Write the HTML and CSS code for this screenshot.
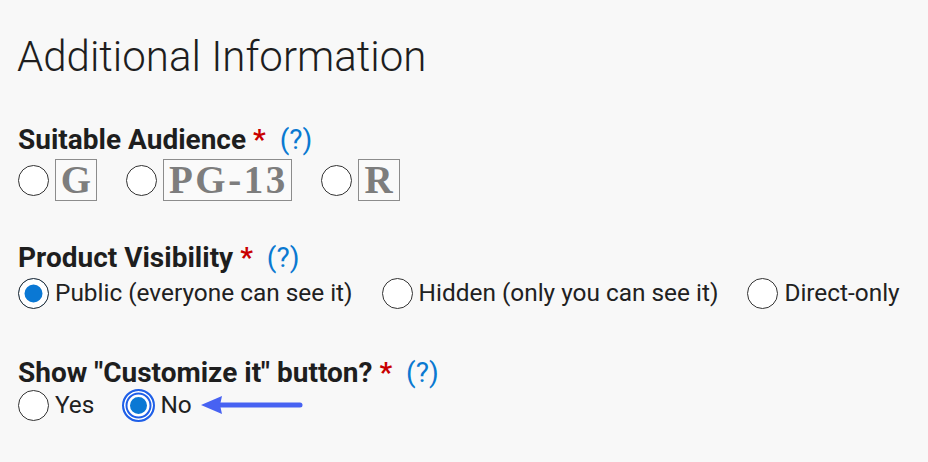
FILE: index.html
```html
<!DOCTYPE html>
<html lang="en">
<head>
<meta charset="utf-8">
<title>Additional Information</title>
<link rel="stylesheet" href="styles.css">
</head>
<body>
<main class="page">
  <h1 class="title">Additional Information</h1>

  <section class="field field-audience">
    <div class="label">Suitable Audience <span class="req">*</span> <a class="help">(?)</a></div>
    <div class="options">
      <label class="opt"><input type="radio" name="aud" class="radio"><span class="rating">G</span></label>
      <label class="opt"><input type="radio" name="aud" class="radio"><span class="rating rating-wide">PG-13</span></label>
      <label class="opt"><input type="radio" name="aud" class="radio"><span class="rating">R</span></label>
    </div>
  </section>

  <section class="field field-visibility">
    <div class="label">Product Visibility <span class="req">*</span> <a class="help">(?)</a></div>
    <div class="options">
      <label class="opt"><input type="radio" name="vis" class="radio checked" checked><span class="opt-text">Public (everyone can see it)</span></label>
      <label class="opt"><input type="radio" name="vis" class="radio"><span class="opt-text">Hidden (only you can see it)</span></label>
      <label class="opt"><input type="radio" name="vis" class="radio"><span class="opt-text">Direct-only</span></label>
    </div>
  </section>

  <section class="field field-customize">
    <div class="label">Show "Customize it" button? <span class="req">*</span> <a class="help">(?)</a></div>
    <div class="options">
      <label class="opt"><input type="radio" name="cust" class="radio"><span class="opt-text">Yes</span></label>
      <label class="opt"><input type="radio" name="cust" class="radio focused" checked><span class="opt-text">No</span></label>
      <svg class="arrow" width="104" height="22" viewBox="0 0 104 22" aria-hidden="true">
        <path d="M18 11 H99" stroke="#4762f2" stroke-width="5" stroke-linecap="round" fill="none"/>
        <path d="M0 11 L21 2 L19 11 L21 20 Z" fill="#4762f2"/>
      </svg>
    </div>
  </section>
</main>
</body>
</html>
```

FILE: styles.css
```css
html, body {
  margin: 0;
  padding: 0;
  background: #f8f8f8;
}

body {
  font-family: Roboto, "Noto Sans", Arial, sans-serif;
  color: #212121;
}

.page {
  padding: 27px 18px 0;
}

.title {
  margin: 0 0 0 -1px;
  font-size: 42px;
  font-weight: 300;
  line-height: 60px;
  color: #1e1e1e;
}

.field {
  margin-top: 36px;
}

.field-visibility {
  margin-top: 40px;
}

.field-customize {
  margin-top: 45px;
}

.label {
  font-size: 28px;
  font-weight: 700;
  line-height: 34px;
  color: #1e1e1e;
}

.req {
  color: #c90000;
  margin-right: 7px;
}

.help {
  font-weight: 400;
  color: #0a79d1;
}

.options {
  display: flex;
  align-items: center;
  gap: 29px;
  margin-top: 2px;
}

.field-visibility .options {
  margin-top: 0;
}

.field-customize .options {
  margin-top: -3px;
}

.opt {
  display: flex;
  align-items: center;
  gap: 6px;
}

.radio {
  appearance: none;
  -webkit-appearance: none;
  margin: 0;
  width: 31px;
  height: 31px;
  border: 1.5px solid #333;
  border-radius: 50%;
  background: #fff;
  flex: none;
}

.radio.checked {
  background: #0a78d4;
  box-shadow: inset 0 0 0 5.5px #fff;
}

.radio.focused {
  width: 33px;
  height: 33px;
  margin: 0 -1px;
  border: 2px solid #1f5fe8;
  background: #0a78d4;
  box-shadow: inset 0 0 0 1.5px #fff, inset 0 0 0 3.5px #1f5fe8, inset 0 0 0 6px #fff;
}

.opt-text {
  font-size: 24.4px;
  line-height: 36px;
}

.rating {
  display: inline-block;
  box-sizing: border-box;
  height: 42px;
  padding: 0 2px 0 4px;
  min-width: 42px;
  text-align: center;
  border: 1.5px solid #8c8c8c;
  background: #fafafa;
  font-family: "Liberation Serif", "Times New Roman", serif;
  font-weight: 700;
  font-size: 39px;
  letter-spacing: 2px;
  line-height: 40px;
  color: #7d7d7d;
}

.rating-wide {
  padding: 0 3px 0 5px;
  letter-spacing: 2.5px;
}

.arrow {
  margin-left: -20px;
  flex: none;
}
```
